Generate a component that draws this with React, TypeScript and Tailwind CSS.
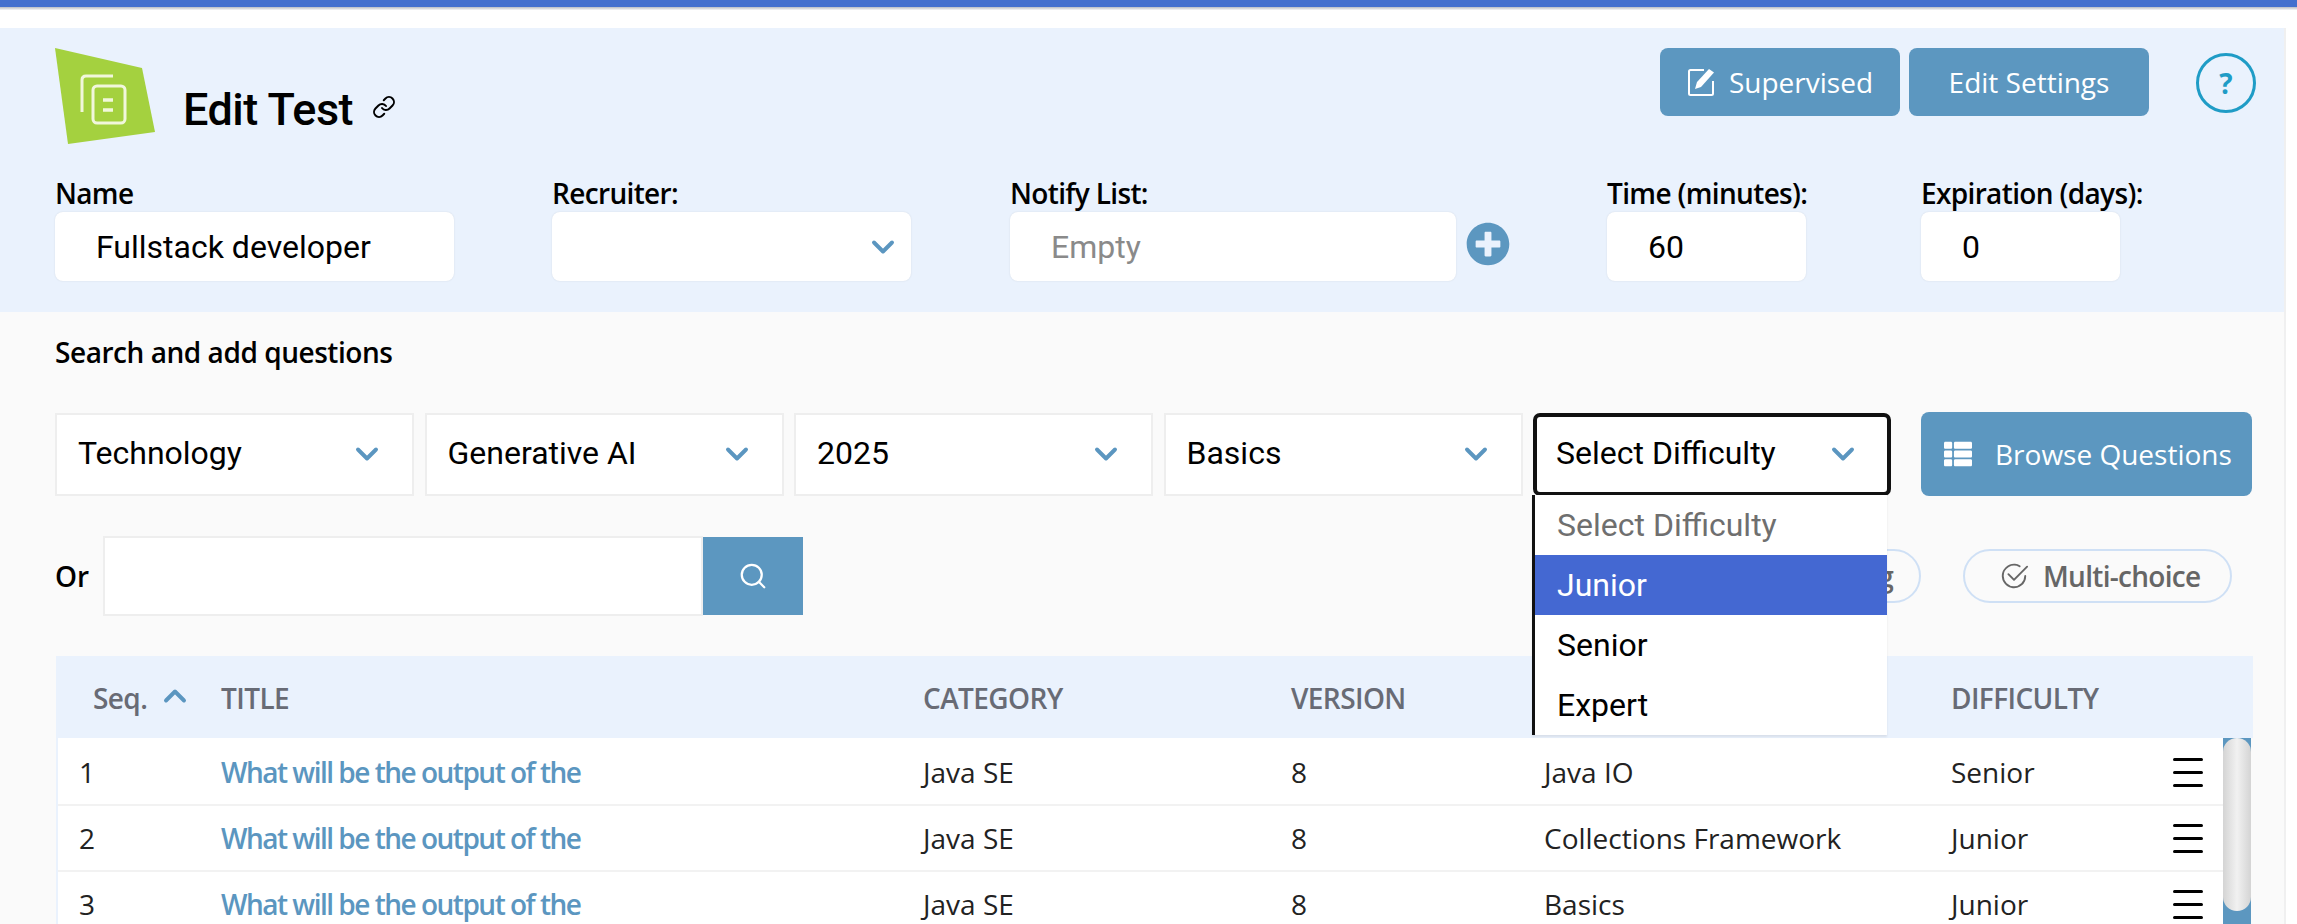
import React from "react";
import { ChevronDown, ChevronUp, Link, Search } from "lucide-react";
import { FaPlusCircle, FaThList } from "react-icons/fa";
import { BsCheck2Circle } from "react-icons/bs";

const roboto = "font-['Roboto',sans-serif]";
const open = "font-['Open_Sans',sans-serif]";

function Label({ children }: { children: React.ReactNode }) {
  return <div className={`${open} h-[36px] text-[28px] leading-[34px] font-semibold text-black whitespace-nowrap tracking-[-0.65px]`}>{children}</div>;
}

function Field({ label, text, className, muted }: { label: string; text?: string; className: string; muted?: boolean }) {
  return (
    <div className={className}>
      <Label>{label}</Label>
      <div className={`${roboto} h-[69px] flex items-center bg-white rounded-[8px] shadow-[0_0_2px_rgba(0,0,0,0.1)] pl-[41px] text-[32px] ${muted ? "text-[#8a8a8a]" : "text-black"}`}>
        {text}
      </div>
    </div>
  );
}

function Filter({ text, active }: { text: string; active?: boolean }) {
  return (
    <div
      className={`${roboto} h-[83px] flex items-center justify-between bg-white text-[32px] text-black ${
        active ? "w-[358px] border-4 border-[#111] rounded-[7px] pl-[19px] pr-[26px]" : "w-[359px] border-2 border-[#eeeeee] pl-[21px] pr-[27px]"
      }`}
    >
      <span className="whitespace-nowrap pb-[2px]">{text}</span>
      <ChevronDown size={36} strokeWidth={2.6} className="text-[#5b96c0]" />
    </div>
  );
}

function Row({ n, cat, ver, topic, diff }: { n: number; cat: string; ver: string; topic: string; diff: string }) {
  return (
    <div className={`${open} h-[66px] flex items-center border-b-2 border-[#f2f2f2] text-[28px] text-[#222] whitespace-nowrap`}>
      <div className="w-[163px] pl-[21px]">{n}</div>
      <div className="w-[702px] text-[#5b96c0] font-semibold tracking-[-1.5px]">What will be the output of the</div>
      <div className="w-[368px]">{cat}</div>
      <div className="w-[253px]">{ver}</div>
      <div className="w-[407px]">{topic}</div>
      <div className="w-[222px]">{diff}</div>
      <div className="w-[30px] flex flex-col gap-[10px]">
        <span className="h-[3px] bg-black rounded-full" />
        <span className="h-[3px] bg-black rounded-full" />
        <span className="h-[3px] bg-black rounded-full" />
      </div>
    </div>
  );
}

export default function App() {
  return (
    <div className="h-[924px] w-[2297px] overflow-hidden bg-white">
      <div className="h-[7px] bg-[#4470ce]" />
      <div className="h-[3px] bg-gradient-to-b from-[#b8bcc4] to-[#f6f6f6]" />
      <div className="h-[18px]" />
      <div className="w-[2286px] border-r-2 border-[#f0f0f0] bg-[#fafafa] h-[896px]">
        <section className="h-[284px] bg-[#eaf2fd] px-[55px] pt-[20px]">
          <div className="flex h-[96px]">
            <svg width="100" height="96" viewBox="0 0 100 96" className="shrink-0">
              <polygon points="0,0 87,20 100,84 13,96" fill="#a4d13f" />
              <path d="M58 28H31q-4 0-4 4V64" fill="none" stroke="#f1f7dc" strokeWidth="3" />
              <rect x="38" y="38" width="32" height="37" rx="4" fill="none" stroke="#f1f7dc" strokeWidth="3" />
              <path d="M48 52H58M48 62H58" stroke="#f1f7dc" strokeWidth="3.5" />
            </svg>
            <h1 className={`${roboto} ml-[28px] mt-[35px] h-[54px] text-[45px] leading-[54px] font-medium text-black tracking-[-0.5px]`}>Edit Test</h1>
            <Link size={24} strokeWidth={2} className="ml-[19px] mt-[47px] text-black" />
            <div className={`${open} ml-auto flex gap-[9px] text-[28px] text-white h-[68px]`}>
              <div className="w-[240px] bg-[#5c97c0] rounded-[8px] flex items-center justify-center gap-[12px]">
                <svg width="30" height="30" viewBox="0 0 30 30" fill="none">
                  <path d="M17 3H3.5Q2 3 2 4.5V26.5Q2 28 3.5 28H24.5Q26 28 26 26.5V14" stroke="white" strokeWidth="2" />
                  <path d="M8 22L10 15L22 2L27 5.5L14 20Z" fill="white" />
                </svg>
                <span>Supervised</span>
              </div>
              <div className="w-[240px] bg-[#5c97c0] rounded-[8px] flex items-center justify-center">Edit Settings</div>
            </div>
            <div className={`${open} ml-[47px] mr-[-27px] mt-[5px] w-[60px] h-[60px] rounded-full border-[3px] border-[#1f9cc6] flex items-center justify-center text-[28px] font-bold text-[#1f9cc6]`}>?</div>
          </div>
          <div className="flex mt-[32px]">
            <Field label="Name" text="Fullstack developer" className="w-[399px]" />
            <div className="w-[98px]" />
            <div className="w-[359px]">
              <Label>Recruiter:</Label>
              <div className="h-[69px] flex items-center justify-end bg-white rounded-[8px] shadow-[0_0_2px_rgba(0,0,0,0.1)] pr-[10px]">
                <ChevronDown size={36} strokeWidth={2.6} className="text-[#5b96c0]" />
              </div>
            </div>
            <div className="w-[99px]" />
            <Field label="Notify List:" text="Empty" muted className="w-[446px]" />
            <FaPlusCircle size={44} className="ml-[10px] mt-[46px] text-[#5c97c0]" />
            <div className="w-[97px]" />
            <Field label="Time (minutes):" text="60" className="w-[199px]" />
            <div className="w-[115px]" />
            <Field label="Expiration (days):" text="0" className="w-[199px]" />
          </div>
        </section>

        <section className="pl-[55px] pr-[20px] relative">
          <div className={`${open} pt-[25px] h-[100px] text-[28px] leading-[30px] font-semibold text-black tracking-[-0.45px]`}>Search and add questions</div>
          <div className="flex items-center gap-[10.5px] h-[84px]">
            <Filter text="Technology" />
            <Filter text="Generative AI" />
            <Filter text="2025" />
            <Filter text="Basics" />
            <Filter text="Select Difficulty" active />
            <div className={`${open} ml-[19.5px] w-[331px] h-[84px] bg-[#5c97c0] rounded-[8px] text-white text-[28px] flex items-center pl-[23px] gap-[23px] whitespace-nowrap`}>
              <FaThList size={28} />
              <span>Browse Questions</span>
            </div>
          </div>

          <div className="flex items-center h-[80px] mt-[40px]">
            <span className={`${open} w-[48px] text-[28px] font-semibold text-black`}>Or</span>
            <div className="w-[600px] h-[80px] bg-white border-2 border-[#eeeeee]" />
            <div className="w-[100px] h-[78px] bg-[#5c97c0] flex items-center justify-center">
              <Search size={30} strokeWidth={1.8} className="text-white" />
            </div>
            <div className={`${open} ml-auto mr-[32px] flex gap-[42px] text-[28px] font-semibold text-[#666]`}>
              <div className="w-[148px] h-[54px] rounded-full border-2 border-[#cfe0f5] flex items-center justify-center">Coding</div>
              <div className="w-[269px] h-[54px] rounded-full border-2 border-[#cfe0f5] flex items-center pl-[34px] gap-[14px] tracking-[-0.7px]">
                <BsCheck2Circle size={30} />
                <span>Multi-choice</span>
              </div>
            </div>
          </div>

          <div className="mt-[40px] ml-[1px] w-[2197px]">
            <div className={`${open} h-[82px] pt-[2px] bg-[#eaf2fd] flex items-center text-[28px] font-semibold text-[#686b75] tracking-[-0.6px] whitespace-nowrap`}>
              <div className="w-[165px] pl-[37px] flex items-center gap-[10px]">
                <span>Seq.</span>
                <ChevronUp size={36} strokeWidth={2.6} className="text-[#5b96c0] -mt-[4px]" />
              </div>
              <div className="w-[702px]">TITLE</div>
              <div className="w-[368px]">CATEGORY</div>
              <div className="w-[660px]">VERSION</div>
              <div>DIFFICULTY</div>
            </div>
            <div className="flex border-l-2 border-[#eaf2fd] pr-[2px]">
              <div className="flex-1 bg-white pt-[2px]">
                <Row n={1} cat="Java SE" ver="8" topic="Java IO" diff="Senior" />
                <Row n={2} cat="Java SE" ver="8" topic="Collections Framework" diff="Junior" />
                <Row n={3} cat="Java SE" ver="8" topic="Basics" diff="Junior" />
              </div>
              <div className="w-[28px] h-[198px] bg-[#5c97c0]">
                <div className="h-[173px] rounded-[14px] bg-gradient-to-r from-[#d4d4d4] via-[#f1f1f1] to-[#d4d4d4]" />
              </div>
            </div>
          </div>

          <div className={`${roboto} absolute left-[1532px] top-[183px] w-[355px] h-[240px] bg-white border-l-[3px] border-[#111] text-[32px] text-black shadow-[0_2px_2px_rgba(0,0,0,0.08)]`}>
            <div className="h-[60px] flex items-center pl-[22px] text-[#6f6f6f]">Select Difficulty</div>
            <div className="h-[60px] flex items-center pl-[22px] bg-[#4468d2] text-white">Junior</div>
            <div className="h-[60px] flex items-center pl-[22px]">Senior</div>
            <div className="h-[60px] flex items-center pl-[22px]">Expert</div>
          </div>
        </section>
      </div>
    </div>
  );
}
